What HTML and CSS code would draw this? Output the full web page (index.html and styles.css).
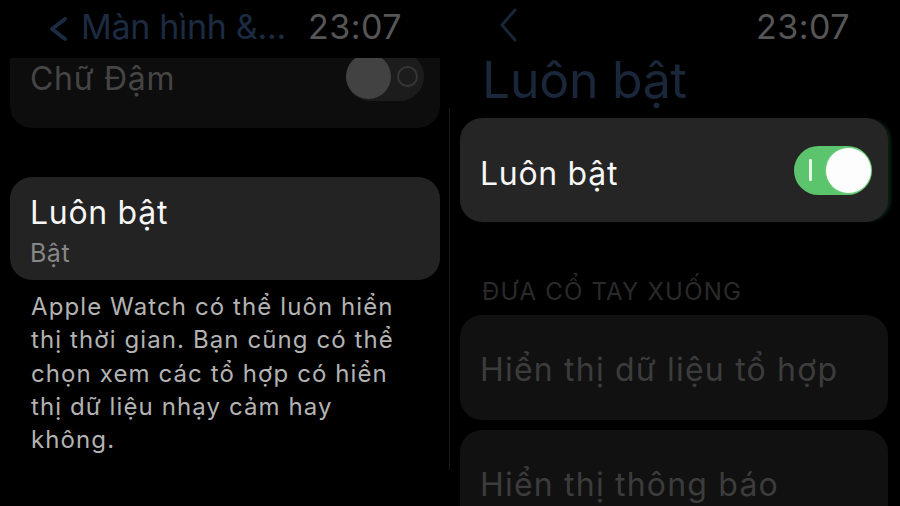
FILE: index.html
```html
<!DOCTYPE html>
<html lang="vi">
<head>
<meta charset="utf-8">
<title>Luôn bật</title>
<link rel="stylesheet" href="styles.css">
</head>
<body>
<div class="screens">
  <section class="screen screen-left">
    <header class="bar">
      <span class="back">
        <svg class="chev chev-left" viewBox="0 0 20 24" width="20" height="24"><polyline points="17,2 4,12 17,22" fill="none" stroke="#1c2b42" stroke-width="3.8" stroke-linecap="round" stroke-linejoin="round"/></svg>
        <span class="back-label">Màn hình &amp;...</span>
      </span>
      <span class="time">23:07</span>
    </header>
    <div class="list">
      <div class="card card-faded row row-bold">
        <span class="row-text faded-text">Chữ Đậm</span>
        <span class="toggle toggle-off"><span class="ring"></span><span class="knob"></span></span>
      </div>
      <div class="card card-lit card-stack">
        <div class="stack-title">Luôn bật</div>
        <div class="stack-sub">Bật</div>
      </div>
      <p class="desc">Apple Watch có thể luôn hiển<br>thị thời gian. Bạn cũng có thể<br>chọn xem các tổ hợp có hiển<br>thị dữ liệu nhạy cảm hay<br>không.</p>
    </div>
  </section>
  <div class="divider"></div>
  <section class="screen screen-right">
    <header class="bar">
      <span class="back">
        <svg class="chev chev-right" viewBox="0 0 20 34" width="20" height="34"><polyline points="17,2 4,17 17,32" fill="none" stroke="#1a2638" stroke-width="3" stroke-linecap="round" stroke-linejoin="round"/></svg>
      </span>
      <span class="time">23:07</span>
    </header>
    <h1 class="big-title">Luôn bật</h1>
    <div class="card card-lit card-lit-right row row-main">
      <span class="row-text">Luôn bật</span>
      <span class="toggle toggle-on"><span class="mark"></span><span class="knob"></span></span>
    </div>
    <div class="section-label">ĐƯA CỔ TAY XUỐNG</div>
    <div class="card card-dim row row-dim">
      <span class="row-text dim-text">Hiển thị dữ liệu tổ hợp</span>
    </div>
    <div class="card card-dim row row-dim">
      <span class="row-text dim-text">Hiển thị thông báo</span>
    </div>
  </section>
</div>
</body>
</html>
```
FILE: styles.css
```css
* { box-sizing: border-box; }
html, body {
  margin: 0;
  padding: 0;
  background: #000;
}
body {
  font-family: Inter, "Noto Sans", "DejaVu Sans", sans-serif;
  color: #f4f4f4;
}
.screens {
  display: flex;
  width: 900px;
  height: 506px;
  overflow: hidden;
  background: #000;
}
.screen {
  display: flex;
  flex-direction: column;
  height: 506px;
  overflow: hidden;
}
.screen-left {
  width: 449px;
  padding: 0 9px 0 10px;
}
.divider {
  width: 1px;
  height: 362px;
  margin-top: 108px;
  background: #181818;
  flex: none;
}
.screen-right {
  width: 450px;
  padding: 0 12px 0 10px;
}

/* header */
.bar {
  display: flex;
  justify-content: space-between;
  align-items: flex-start;
  height: 58px;
  padding: 0 38px 0 38px;
  flex: none;
  position: relative;
  z-index: 2;
  background: #000;
}
.back {
  display: flex;
  align-items: flex-start;
  gap: 13px;
}
.chev-left { margin-top: 17px; }
.chev-right { margin-top: 8px; }
.back-label {
  font-size: 34px;
  line-height: 54px;
  color: #1c2b42;
  letter-spacing: -0.3px;
}
.time {
  font-size: 34px;
  line-height: 54px;
  color: #565656;
  letter-spacing: 0.5px;
}
.screen-right .bar { height: 48px; }

/* list */
.list {
  flex: 1;
  overflow: hidden;
  display: flex;
  flex-direction: column;
}
.card {
  border-radius: 22px;
  flex: none;
}
.row {
  display: flex;
  align-items: center;
  justify-content: space-between;
  padding: 0 16px 0 20px;
}
.row-text {
  font-size: 32px;
  line-height: 38px;
  letter-spacing: 0.7px;
}
.card-faded {
  background: #0d0d0d;
  height: 104px;
  margin-top: -34px;
}
.faded-text { color: #454545; padding-top: 5px; }

.card-lit { background: #232323; }
.card-stack {
  height: 103px;
  margin-top: 49px;
  padding: 17px 20px 0 20px;
}
.stack-title {
  font-size: 32px;
  line-height: 38px;
  color: #f6f6f6;
  letter-spacing: 0.7px;
}
.stack-sub {
  font-size: 25px;
  line-height: 32px;
  margin-top: 5px;
  color: #878787;
  letter-spacing: 0.5px;
}
.desc {
  margin: 10px 0 0 21px;
  font-size: 24px;
  line-height: 33.3px;
  color: #b3b3b3;
  letter-spacing: 1.1px;
}

/* right screen */
.big-title {
  margin: 0 0 0 22px;
  font-size: 50px;
  font-weight: 400;
  line-height: 64px;
  height: 70px;
  color: #1a2639;
  letter-spacing: -0.3px;
  flex: none;
}
.card-lit-right {
  background: #252525;
  height: 104px;
  box-shadow: 4px 0 3px -1px rgba(30, 90, 45, 0.35);
}
.row-main .row-text { padding-top: 8px; color: #f6f6f6; }
.section-label {
  margin: 55px 0 0 22px;
  font-size: 24px;
  line-height: 30px;
  color: #2a2a2a;
  letter-spacing: 1.2px;
  flex: none;
}
.card-dim {
  background: #111111;
  height: 105px;
  margin-top: 8px;
}
.card-dim + .card-dim { margin-top: 10px; }
.row-dim { align-items: flex-start; padding-top: 36px; }
.row-dim .row-text { line-height: 38px; letter-spacing: 1.2px; }
.dim-text { color: #3c3c3c; }

/* toggles */
.toggle {
  position: relative;
  width: 78px;
  height: 49px;
  border-radius: 25px;
  flex: none;
}
.toggle .knob {
  position: absolute;
  top: 2px;
  width: 45px;
  height: 45px;
  border-radius: 50%;
}
.toggle-off { background: #1c1c1c; }
.toggle-off .knob { left: 0; background: #424242; }
.toggle-off .ring {
  position: absolute;
  left: 51px;
  top: 14px;
  width: 21px;
  height: 21px;
  border: 2px solid #353535;
  border-radius: 50%;
}
.toggle-on { background: #5cc46d; }
.toggle-on .knob { right: 1px; background: #fdfdfd; box-shadow: 0 0 2px rgba(200,255,210,0.6); }
.toggle-on .mark {
  position: absolute;
  left: 15px;
  top: 13px;
  width: 2.5px;
  height: 22px;
  background: rgba(255,255,255,0.85);
  border-radius: 1px;
}
```
